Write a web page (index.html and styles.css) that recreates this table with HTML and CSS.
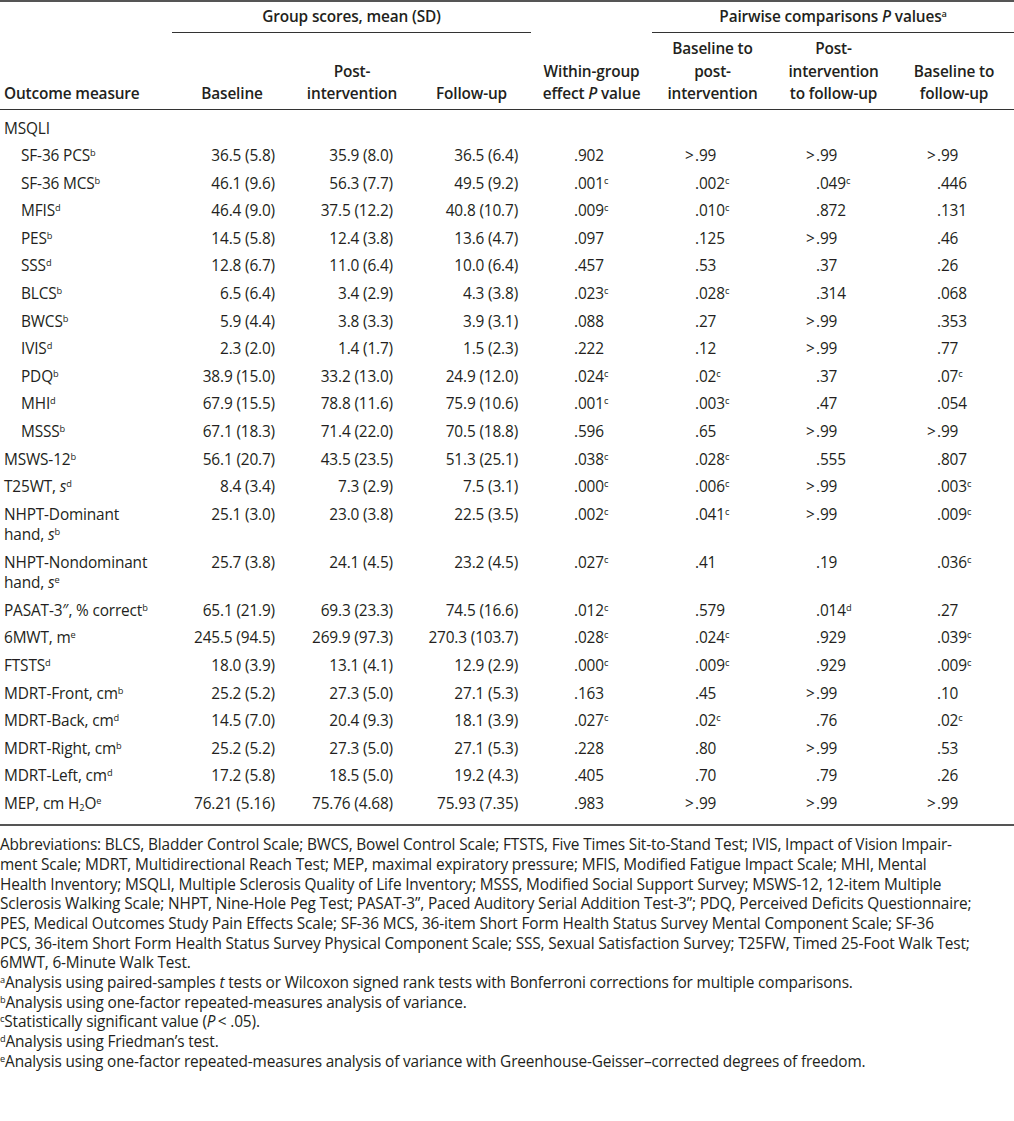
FILE: index.html
```html
<!DOCTYPE html>
<html lang="en">
<head>
<meta charset="utf-8">
<title>Outcome measures table</title>
<link rel="stylesheet" href="styles.css">
</head>
<body>
<div class="page">
<table class="data">
<colgroup>
<col class="c-name"><col class="c-g"><col class="c-g"><col class="c-g3"><col class="c-p"><col class="c-p"><col class="c-p"><col class="c-p4">
</colgroup>
<thead>
<tr class="h1">
<th></th>
<th colspan="3" class="span">Group scores, mean (SD)</th>
<th></th>
<th colspan="3" class="span">Pairwise comparisons <i>P</i> values<sup>a</sup></th>
</tr>
<tr class="h2">
<th class="name">Outcome measure</th>
<th>Baseline</th>
<th>Post-<br>intervention</th>
<th>Follow-up</th>
<th>Within-group<br>effect <i>P</i> value</th>
<th>Baseline to<br>post-<br>intervention</th>
<th>Post-<br>intervention<br>to follow-up</th>
<th>Baseline to<br>follow-up</th>
</tr>
</thead>
<tbody>
<tr class="first"><td class="name">MSQLI</td><td></td><td></td><td></td><td></td><td></td><td></td><td></td></tr>
<tr><td class="name sub">SF-36 PCS<sup>b</sup></td><td class="g1">36.5 (5.8)</td><td class="g2">35.9 (8.0)</td><td class="g3">36.5 (6.4)</td><td class="p">.902</td><td class="p"><span class="gt">&gt;</span>.99</td><td class="p"><span class="gt">&gt;</span>.99</td><td class="p"><span class="gt">&gt;</span>.99</td></tr>
<tr><td class="name sub">SF-36 MCS<sup>b</sup></td><td class="g1">46.1 (9.6)</td><td class="g2">56.3 (7.7)</td><td class="g3">49.5 (9.2)</td><td class="p">.001<sup>c</sup></td><td class="p">.002<sup>c</sup></td><td class="p">.049<sup>c</sup></td><td class="p">.446</td></tr>
<tr><td class="name sub">MFIS<sup>d</sup></td><td class="g1">46.4 (9.0)</td><td class="g2">37.5 (12.2)</td><td class="g3">40.8 (10.7)</td><td class="p">.009<sup>c</sup></td><td class="p">.010<sup>c</sup></td><td class="p">.872</td><td class="p">.131</td></tr>
<tr><td class="name sub">PES<sup>b</sup></td><td class="g1">14.5 (5.8)</td><td class="g2">12.4 (3.8)</td><td class="g3">13.6 (4.7)</td><td class="p">.097</td><td class="p">.125</td><td class="p"><span class="gt">&gt;</span>.99</td><td class="p">.46</td></tr>
<tr><td class="name sub">SSS<sup>d</sup></td><td class="g1">12.8 (6.7)</td><td class="g2">11.0 (6.4)</td><td class="g3">10.0 (6.4)</td><td class="p">.457</td><td class="p">.53</td><td class="p">.37</td><td class="p">.26</td></tr>
<tr><td class="name sub">BLCS<sup>b</sup></td><td class="g1">6.5 (6.4)</td><td class="g2">3.4 (2.9)</td><td class="g3">4.3 (3.8)</td><td class="p">.023<sup>c</sup></td><td class="p">.028<sup>c</sup></td><td class="p">.314</td><td class="p">.068</td></tr>
<tr><td class="name sub">BWCS<sup>b</sup></td><td class="g1">5.9 (4.4)</td><td class="g2">3.8 (3.3)</td><td class="g3">3.9 (3.1)</td><td class="p">.088</td><td class="p">.27</td><td class="p"><span class="gt">&gt;</span>.99</td><td class="p">.353</td></tr>
<tr><td class="name sub">IVIS<sup>d</sup></td><td class="g1">2.3 (2.0)</td><td class="g2">1.4 (1.7)</td><td class="g3">1.5 (2.3)</td><td class="p">.222</td><td class="p">.12</td><td class="p"><span class="gt">&gt;</span>.99</td><td class="p">.77</td></tr>
<tr><td class="name sub">PDQ<sup>b</sup></td><td class="g1">38.9 (15.0)</td><td class="g2">33.2 (13.0)</td><td class="g3">24.9 (12.0)</td><td class="p">.024<sup>c</sup></td><td class="p">.02<sup>c</sup></td><td class="p">.37</td><td class="p">.07<sup>c</sup></td></tr>
<tr><td class="name sub">MHI<sup>d</sup></td><td class="g1">67.9 (15.5)</td><td class="g2">78.8 (11.6)</td><td class="g3">75.9 (10.6)</td><td class="p">.001<sup>c</sup></td><td class="p">.003<sup>c</sup></td><td class="p">.47</td><td class="p">.054</td></tr>
<tr><td class="name sub">MSSS<sup>b</sup></td><td class="g1">67.1 (18.3)</td><td class="g2">71.4 (22.0)</td><td class="g3">70.5 (18.8)</td><td class="p">.596</td><td class="p">.65</td><td class="p"><span class="gt">&gt;</span>.99</td><td class="p"><span class="gt">&gt;</span>.99</td></tr>
<tr><td class="name">MSWS-12<sup>b</sup></td><td class="g1">56.1 (20.7)</td><td class="g2">43.5 (23.5)</td><td class="g3">51.3 (25.1)</td><td class="p">.038<sup>c</sup></td><td class="p">.028<sup>c</sup></td><td class="p">.555</td><td class="p">.807</td></tr>
<tr><td class="name">T25WT, <i>s</i><sup>d</sup></td><td class="g1">8.4 (3.4)</td><td class="g2">7.3 (2.9)</td><td class="g3">7.5 (3.1)</td><td class="p">.000<sup>c</sup></td><td class="p">.006<sup>c</sup></td><td class="p"><span class="gt">&gt;</span>.99</td><td class="p">.003<sup>c</sup></td></tr>
<tr><td class="name">NHPT-Dominant<br>hand, <i>s</i><sup>b</sup></td><td class="g1">25.1 (3.0)</td><td class="g2">23.0 (3.8)</td><td class="g3">22.5 (3.5)</td><td class="p">.002<sup>c</sup></td><td class="p">.041<sup>c</sup></td><td class="p"><span class="gt">&gt;</span>.99</td><td class="p">.009<sup>c</sup></td></tr>
<tr><td class="name">NHPT-Nondominant<br>hand, <i>s</i><sup>e</sup></td><td class="g1">25.7 (3.8)</td><td class="g2">24.1 (4.5)</td><td class="g3">23.2 (4.5)</td><td class="p">.027<sup>c</sup></td><td class="p">.41</td><td class="p">.19</td><td class="p">.036<sup>c</sup></td></tr>
<tr><td class="name">PASAT-3&Prime;, % correct<sup>b</sup></td><td class="g1">65.1 (21.9)</td><td class="g2">69.3 (23.3)</td><td class="g3">74.5 (16.6)</td><td class="p">.012<sup>c</sup></td><td class="p">.579</td><td class="p">.014<sup>d</sup></td><td class="p">.27</td></tr>
<tr><td class="name">6MWT, m<sup>e</sup></td><td class="g1">245.5 (94.5)</td><td class="g2">269.9 (97.3)</td><td class="g3">270.3 (103.7)</td><td class="p">.028<sup>c</sup></td><td class="p">.024<sup>c</sup></td><td class="p">.929</td><td class="p">.039<sup>c</sup></td></tr>
<tr><td class="name">FTSTS<sup>d</sup></td><td class="g1">18.0 (3.9)</td><td class="g2">13.1 (4.1)</td><td class="g3">12.9 (2.9)</td><td class="p">.000<sup>c</sup></td><td class="p">.009<sup>c</sup></td><td class="p">.929</td><td class="p">.009<sup>c</sup></td></tr>
<tr><td class="name">MDRT-Front, cm<sup>b</sup></td><td class="g1">25.2 (5.2)</td><td class="g2">27.3 (5.0)</td><td class="g3">27.1 (5.3)</td><td class="p">.163</td><td class="p">.45</td><td class="p"><span class="gt">&gt;</span>.99</td><td class="p">.10</td></tr>
<tr><td class="name">MDRT-Back, cm<sup>d</sup></td><td class="g1">14.5 (7.0)</td><td class="g2">20.4 (9.3)</td><td class="g3">18.1 (3.9)</td><td class="p">.027<sup>c</sup></td><td class="p">.02<sup>c</sup></td><td class="p">.76</td><td class="p">.02<sup>c</sup></td></tr>
<tr><td class="name">MDRT-Right, cm<sup>b</sup></td><td class="g1">25.2 (5.2)</td><td class="g2">27.3 (5.0)</td><td class="g3">27.1 (5.3)</td><td class="p">.228</td><td class="p">.80</td><td class="p"><span class="gt">&gt;</span>.99</td><td class="p">.53</td></tr>
<tr><td class="name">MDRT-Left, cm<sup>d</sup></td><td class="g1">17.2 (5.8)</td><td class="g2">18.5 (5.0)</td><td class="g3">19.2 (4.3)</td><td class="p">.405</td><td class="p">.70</td><td class="p">.79</td><td class="p">.26</td></tr>
<tr class="last"><td class="name">MEP, cm H<sub>2</sub>O<sup>e</sup></td><td class="g1">76.21 (5.16)</td><td class="g2">75.76 (4.68)</td><td class="g3">75.93 (7.35)</td><td class="p">.983</td><td class="p"><span class="gt">&gt;</span>.99</td><td class="p"><span class="gt">&gt;</span>.99</td><td class="p"><span class="gt">&gt;</span>.99</td></tr>
</tbody>
</table>
<div class="notes">
<p>Abbreviations: BLCS, Bladder Control Scale; BWCS, Bowel Control Scale; FTSTS, Five Times Sit-to-Stand Test; IVIS, Impact of Vision Impair-<br>ment Scale; MDRT, Multidirectional Reach Test; MEP, maximal expiratory pressure; MFIS, Modified Fatigue Impact Scale; MHI, Mental<br>Health Inventory; MSQLI, Multiple Sclerosis Quality of Life Inventory; MSSS, Modified Social Support Survey; MSWS-12, 12-item Multiple<br>Sclerosis Walking Scale; NHPT, Nine-Hole Peg Test; PASAT-3&rdquo;, Paced Auditory Serial Addition Test-3&rdquo;; PDQ, Perceived Deficits Questionnaire;<br>PES, Medical Outcomes Study Pain Effects Scale; SF-36 MCS, 36-item Short Form Health Status Survey Mental Component Scale; SF-36<br>PCS, 36-item Short Form Health Status Survey Physical Component Scale; SSS, Sexual Satisfaction Survey; T25FW, Timed 25-Foot Walk Test;<br>6MWT, 6-Minute Walk Test.</p>
<p><sup>a</sup>Analysis using paired-samples <i>t</i> tests or Wilcoxon signed rank tests with Bonferroni corrections for multiple comparisons.</p>
<p><sup>b</sup>Analysis using one-factor repeated-measures analysis of variance.</p>
<p><sup>c</sup>Statistically significant value (<i>P</i>&thinsp;&lt; .05).</p>
<p><sup>d</sup>Analysis using Friedman&rsquo;s test.</p>
<p><sup>e</sup>Analysis using one-factor repeated-measures analysis of variance with Greenhouse-Geisser&ndash;corrected degrees of freedom.</p>
</div>
</div>
</body>
</html>
```

FILE: styles.css
```css
html, body {
  margin: 0;
  padding: 0;
  background: #ffffff;
}

.page {
  width: 1014px;
  font-family: "Open Sans", "Noto Sans", sans-serif;
  font-size: 15.4px;
  letter-spacing: -0.15px;
  color: #231f20;
}

.data {
  width: 1014px;
  border-collapse: collapse;
  table-layout: fixed;
  border-top: 2px solid #555555;
  border-bottom: 2px solid #555555;
}

.c-name { width: 172px; }
.c-g { width: 120px; }
.c-g3 { width: 119px; }
.c-p { width: 121px; }
.c-p4 { width: 120px; }

th, td {
  padding: 0;
  font-weight: normal;
  white-space: nowrap;
}

th {
  font-weight: 600;
  line-height: 22.5px;
  text-align: center;
  vertical-align: bottom;
}

.h1 th {
  padding: 4px 0 5px;
  line-height: 21px;
}

.h1 th.span {
  border-bottom: 1px solid #333333;
}

.h2 th {
  padding: 5px 0 3px;
  border-bottom: 1px solid #333333;
}

.h2 th.name {
  text-align: left;
  padding-left: 4px;
}

td {
  line-height: 20.4px;
  padding-top: 3.6px;
  padding-bottom: 3.6px;
  vertical-align: top;
}

tr.first td {
  padding-top: 9px;
}

tr.last td {
  padding-bottom: 10px;
}

td.name {
  padding-left: 4px;
  text-align: left;
}

td.name.sub {
  padding-left: 21px;
}

td.g1 { text-align: right; padding-right: 17px; }
td.g2 { text-align: right; padding-right: 19px; }
td.g3 { text-align: right; padding-right: 13px; }

td.p {
  text-align: left;
  padding-left: 43px;
}

.gt {
  display: inline-block;
  width: 10px;
  margin-left: -10px;
  text-align: left;
}

sup {
  font-size: 0.6em;
  line-height: 0;
  vertical-align: 0.55em;
}

sub {
  font-size: 0.6em;
  line-height: 0;
  vertical-align: -0.25em;
}

.notes {
  padding-top: 9px;
  line-height: 19.65px;
  white-space: nowrap;
}

.notes p {
  margin: 0;
}
```
